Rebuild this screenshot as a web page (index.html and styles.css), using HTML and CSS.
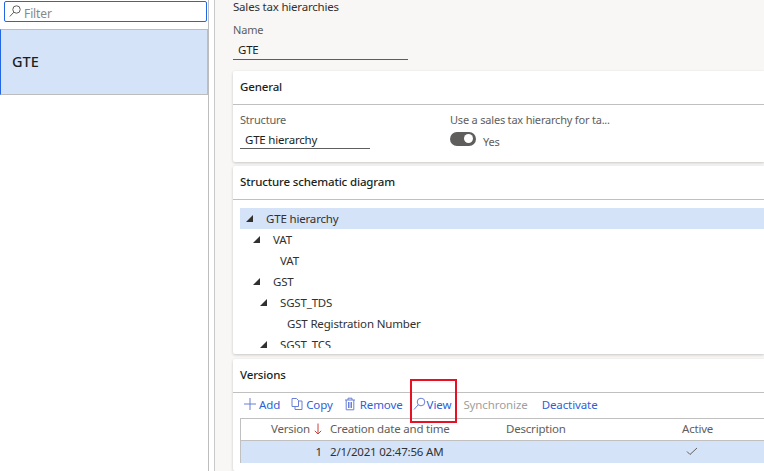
FILE: index.html
```html
<!DOCTYPE html>
<html lang="en">
<head>
<meta charset="utf-8">
<title>Sales tax hierarchies</title>
<link rel="stylesheet" href="styles.css">
</head>
<body>
<div class="page">
  <aside class="nav">
    <div class="filter">
      <svg class="filter-icon" width="12" height="13" viewBox="0 0 12 13"><circle cx="7.5" cy="4.5" r="3.7"/><path d="M4.8 7.2 L0.8 11.5"/></svg>
      <span class="filter-text">Filter</span>
    </div>
    <div class="nav-item">GTE</div>
  </aside>
  <main class="main">
    <div class="title">Sales tax hierarchies</div>
    <div class="name-field">
      <div class="label">Name</div>
      <div class="value name-value">GTE</div>
    </div>
    <section class="card general">
      <h2 class="card-head">General</h2>
      <div class="general-body">
        <div class="structure">
          <div class="label">Structure</div>
          <div class="value structure-value">GTE hierarchy</div>
        </div>
        <div class="use">
          <div class="label">Use a sales tax hierarchy for ta...</div>
          <div class="toggle-row">
            <span class="toggle"><span class="knob"></span></span>
            <span class="label yes">Yes</span>
          </div>
        </div>
      </div>
    </section>
    <section class="card diagram">
      <h2 class="card-head">Structure schematic diagram</h2>
      <div class="tree">
        <div class="node selected l0"><i class="arrow"></i>GTE hierarchy</div>
        <div class="node l1"><i class="arrow"></i>VAT</div>
        <div class="node l2">VAT</div>
        <div class="node l1"><i class="arrow"></i>GST</div>
        <div class="node l2"><i class="arrow"></i>SGST_TDS</div>
        <div class="node l3">GST Registration Number</div>
        <div class="node l2"><i class="arrow"></i>SGST_TCS</div>
      </div>
    </section>
    <section class="card versions">
      <h2 class="card-head">Versions</h2>
      <div class="toolbar">
        <span class="tool">
          <svg width="14" height="14" viewBox="0 0 14 14"><path d="M7 1V13M1 7H13"/></svg>Add</span>
        <span class="tool copy">
          <svg width="12" height="14" viewBox="0 0 12 14"><path d="M1 1.5H5.5L7.5 3.5V9.5H1ZM7.5 4H11V12.5H4V9.5"/></svg>Copy</span>
        <span class="tool remove">
          <svg width="12" height="14" viewBox="0 0 12 14"><path d="M1 3H11M4 3V1.2H8V3M2.2 3V12.8H9.8V3M4.5 5V11M6 5V11M7.5 5V11"/></svg>Remove</span>
        <span class="tool view">
          <svg width="13" height="14" viewBox="0 0 13 14"><circle cx="8" cy="5" r="3.8"/><path d="M5.2 7.8 L1 12.5"/></svg>View</span>
        <span class="tool disabled">Synchronize</span>
        <span class="tool deactivate">Deactivate</span>
      </div>
      <div class="grid">
        <div class="grid-row grid-head">
          <span class="c-version">Version <svg class="sort" width="8" height="12" viewBox="0 0 8 12"><path d="M4 0.5V11M0.8 7.8L4 11L7.2 7.8"/></svg></span>
          <span class="c-date">Creation date and time</span>
          <span class="c-desc">Description</span>
          <span class="c-active">Active</span>
        </div>
        <div class="grid-row grid-sel">
          <span class="c-version num">1</span>
          <span class="c-date">2/1/2021 02:47:56 AM</span>
          <span class="c-desc"></span>
          <span class="c-active"><svg class="check" width="12" height="9" viewBox="0 0 12 9"><path d="M1 4.5L4 7.5L11 1"/></svg></span>
        </div>
      </div>
    </section>
    <div class="highlight"></div>
  </main>
</div>
</body>
</html>
```

FILE: styles.css
```css
* { box-sizing: border-box; }
html, body { margin: 0; height: 100%; overflow: hidden; }
body { font-family: "Noto Sans", "Open Sans", sans-serif; font-size: 12px; color: #323130; background: #fff; }
.page { display: flex; width: 764px; height: 471px; overflow: hidden; }

.nav { width: 209px; flex: none; border-right: 1px solid #bdbdbd; background: #fff; padding-top: 1px; }
.filter { margin-left: 4px; width: 203px; height: 21px; border: 1px solid #2266e3; border-radius: 2px; display: flex; align-items: center; gap: 3px; padding-left: 4px; color: #8a8886; font-size: 12px; }
.filter-text { padding-top: 3px; letter-spacing: -0.1px; }
.filter-icon { fill: none; stroke: #605e5c; stroke-width: 1; }
.nav-item { margin-top: 7px; height: 66px; padding-left: 11px; padding-bottom: 2px; display: flex; align-items: center; background: #d5e3f8; border-top: 1px solid #bdbdbd; border-bottom: 1px solid #bdbdbd; border-left: 1px solid #2266e3; border-right: 1px solid #bdbdbd; font-size: 14.5px; font-weight: 500; color: #201f1e; }

.main { position: relative; flex: 1; min-width: 0; padding-left: 18px; background: #f8f7f6; border-left: 1px solid #c8c8c8; margin-left: 5px; }
.title { height: 14px; line-height: 13px; font-size: 11.5px; letter-spacing: -0.2px; }
.label { font-size: 11px; letter-spacing: -0.2px; color: #605e5c; line-height: 16px; }
.value { font-size: 11.5px; letter-spacing: -0.2px; color: #201f1e; border-bottom: 1px solid #605e5c; line-height: 18px; }
.name-field { margin-top: 8px; width: 175px; height: 38px; margin-bottom: 11px; }
.name-value { padding-left: 5px; height: 22px; padding-top: 3px; }

.card { background: #fff; box-shadow: 0 1px 3px rgba(0,0,0,.2); border-radius: 2px 0 0 2px; }
.card-head { margin: 0; height: 34px; padding: 0 7px 3px; display: flex; align-items: center; font-size: 11.5px; letter-spacing: -0.15px; font-weight: 500; color: #201f1e; border-bottom: 1px solid #c0c0c0; }
.general { height: 91px; margin-bottom: 4px; }
.general-body { display: flex; padding: 7px 7px 0; }
.structure { width: 130px; }
.structure-value { padding-left: 5px; height: 21px; padding-top: 3px; }
.use { margin-left: 80px; }
.use .label { line-height: 15px; }
.toggle-row { display: flex; align-items: center; gap: 7px; margin-top: 1px; }
.toggle { width: 26px; height: 14px; border-radius: 7px; background: #605e5c; display: flex; justify-content: flex-end; align-items: center; padding-right: 3px; }
.knob { width: 9px; height: 9px; border-radius: 50%; background: #fff; }
.yes { margin-top: 6px; }

.diagram { height: 188px; margin-bottom: 5px; }
.tree { height: 140px; margin-top: 8px; margin-left: 7px; overflow: hidden; }
.node { height: 21px; line-height: 21px; font-size: 11.5px; letter-spacing: -0.17px; display: flex; align-items: center; color: #323130; white-space: nowrap; }
.selected { background: #d5e3f8; }
.l0 { padding-left: 26px; }
.l1 { padding-left: 33px; }
.l2 { padding-left: 40px; }
.l3 { padding-left: 47px; }
.arrow { width: 0; height: 0; margin-left: -20px; margin-right: 13px; border-style: solid; border-width: 0 0 7px 7px; border-color: transparent transparent #323130 transparent; }

.versions { height: 112px; }
.toolbar { display: flex; height: 25px; align-items: center; padding-left: 10px; padding-bottom: 3px; font-size: 11.5px; letter-spacing: -0.1px; color: #2d5fd8; }
.tool { display: flex; align-items: center; gap: 2px; margin-right: 11px; }
.tool svg { fill: none; stroke: #6b7fd6; stroke-width: 1; }
.copy { gap: 3px; }
.remove { gap: 4px; margin-right: 10px; }
.view { gap: 1px; margin-right: 12px; }
.disabled { color: #a19f9d; margin-right: 14px; }
.grid { margin-left: 7px; border-top: 1px solid #c0c0c0; border-left: 1px solid #c0c0c0; }
.grid-row { display: flex; height: 22px; align-items: center; padding-bottom: 2px; font-size: 11.5px; letter-spacing: -0.2px; }
.grid-head { border-bottom: 1px solid #c0c0c0; color: #605e5c; }
.grid-sel { background: #d5e3f8; height: 22px; color: #323130; }
.c-version { width: 89px; flex: none; display: flex; justify-content: flex-end; align-items: center; gap: 4px; padding-right: 8px; }
.num { padding-right: 8px; }
.sort { fill: none; stroke: #c8433a; stroke-width: 1; }
.c-date { width: 176px; flex: none; }
.c-desc { width: 176px; flex: none; }
.c-active { flex: none; }
.check { fill: none; stroke: #605e5c; stroke-width: 1; margin-left: 4px; display: block; }

.highlight { position: absolute; left: 195px; top: 379px; width: 47px; height: 44px; border: 2px solid #e81123; pointer-events: none; }
```
